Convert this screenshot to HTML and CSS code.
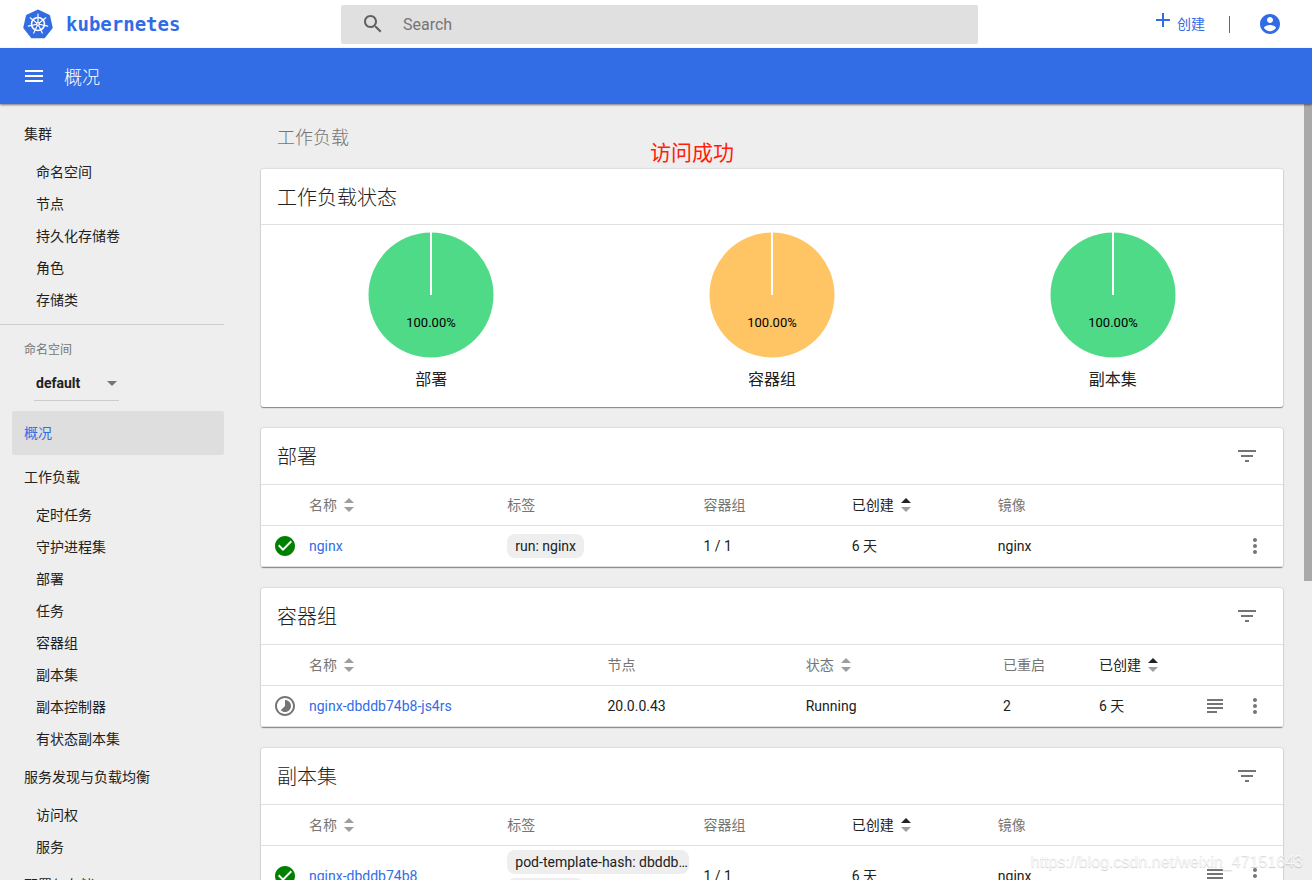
FILE: index.html
```html
<!DOCTYPE html>
<html lang="zh-CN">
<head>
<meta charset="utf-8">
<meta name="viewport" content="width=device-width, initial-scale=1">
<title>概况 - Kubernetes Dashboard</title>
<link rel="stylesheet" href="styles.css">
</head>
<body>
<svg class="sprite" aria-hidden="true">
  <symbol id="i-sort" viewBox="0 0 10 14"><path class="sort-up" d="M5 0l5 5H0z"/><path d="M0 9h10l-5 5z"/></symbol>
  <symbol id="i-filter" viewBox="0 0 24 24"><path d="M10 18h4v-2h-4v2zM3 6v2h18V6H3zm3 7h12v-2H6v2z"/></symbol>
  <symbol id="i-more" viewBox="0 0 24 24"><path d="M12 8c1.100 0 2-.9 2-2s-.9-2-2-2-2 .9-2 2 .9 2 2 2zm0 2c-1.100 0-2 .9-2 2s.9 2 2 2 2-.9 2-2-.9-2-2-2zm0 6c-1.100 0-2 .9-2 2s.9 2 2 2 2-.9 2-2-.9-2-2-2z"/></symbol>
  <symbol id="i-logs" viewBox="0 0 24 24"><path d="M14 17H4v2h10v-2zm6-8H4v2h16V9zM4 15h16v-2H4v2zM4 5v2h16V5H4z"/></symbol>
  <symbol id="i-ok" viewBox="0 0 24 24"><path d="M12 2C6.480 2 2 6.480 2 12s4.480 10 10 10 10-4.480 10-10S17.520 2 12 2zm-2 15l-5-5 1.410-1.410L10 14.170l7.590-7.590L19 8l-9 9z"/></symbol>
  <symbol id="i-pending" viewBox="0 0 24 24"><path d="M16.240 7.760C15.070 6.590 13.540 6 12 6v6l-4.240 4.240c2.340 2.340 6.140 2.340 8.490 0 2.340-2.340 2.340-6.140-.01-8.480zM12 2C6.480 2 2 6.480 2 12s4.480 10 10 10 10-4.480 10-10S17.520 2 12 2zm0 18c-4.420 0-8-3.580-8-8s3.580-8 8-8 8 3.580 8 8-3.580 8-8 8z"/></symbol>
</svg>

<header class="topbar">
  <a class="brand" href="#">
    <svg class="brand-mark" viewBox="0 0 30 30" aria-hidden="true">
      <path d="M15 2L25.600 7.100 28.200 18.500 20.900 27.700H9.100L1.800 18.500 4.400 7.100z" fill="#326ce5" stroke="#326ce5" stroke-width="3" stroke-linejoin="round"/>
      <g fill="none" stroke="#fff" stroke-linecap="round">
        <circle cx="15" cy="15" r="6.500" stroke-width="1.600"/>
        <path stroke-width="1.200" d="M15 15V5M15 15l7.800-6.200M15 15l9.700 2.200M15 15l4.300 9M15 15l-4.300 9M15 15l-9.700 2.200M15 15L7.200 8.800"/>
      </g>
      <circle cx="15" cy="15" r="1.800" fill="#fff"/><circle cx="15" cy="15" r=".8" fill="#326ce5"/>
    </svg>
    <span class="brand-name">kubernetes</span>
  </a>
  <label class="search">
    <svg class="icon" viewBox="0 0 24 24" aria-hidden="true"><path d="M15.500 14h-.79l-.28-.27C15.410 12.590 16 11.110 16 9.500 16 5.910 13.090 3 9.500 3S3 5.910 3 9.500 5.910 16 9.500 16c1.610 0 3.090-.59 4.230-1.570l.27.28v.79l5 4.990L20.490 19l-4.990-5zm-6 0C7.010 14 5 11.990 5 9.500S7.010 5 9.500 5 14 7.010 14 9.500 11.990 14 9.500 14z"/></svg>
    <input class="search-input" type="text" placeholder="Search" aria-label="Search">
  </label>
  <div class="top-actions">
    <button class="create" type="button">
      <svg class="icon create-icon" viewBox="0 0 24 24" aria-hidden="true"><path d="M19 13h-6v6h-2v-6H5v-2h6V5h2v6h6v2z"/></svg>
      <span>创建</span>
    </button>
    <span class="top-divider"></span>
    <button class="icon-button account" type="button" aria-label="账户">
      <svg class="icon" viewBox="0 0 24 24" aria-hidden="true"><path d="M12 2C6.480 2 2 6.480 2 12s4.480 10 10 10 10-4.480 10-10S17.520 2 12 2zm0 3c1.660 0 3 1.340 3 3s-1.340 3-3 3-3-1.340-3-3 1.340-3 3-3zm0 14.200c-2.500 0-4.710-1.280-6-3.220.03-1.990 4-3.080 6-3.080 1.990 0 5.970 1.090 6 3.080-1.290 1.940-3.500 3.220-6 3.220z"/></svg>
    </button>
  </div>
</header>

<div class="actionbar">
  <button class="icon-button menu" type="button" aria-label="菜单">
    <svg class="icon" viewBox="0 0 24 24" aria-hidden="true"><path d="M3 18h18v-2H3v2zm0-5h18v-2H3v2zm0-7v2h18V6H3z"/></svg>
  </button>
  <h1 class="page-title">概况</h1>
</div>

<div class="layout">
  <nav class="sidebar">
    <a class="nav-group" href="#">集群</a>
    <a class="nav-item" href="#">命名空间</a>
    <a class="nav-item" href="#">节点</a>
    <a class="nav-item" href="#">持久化存储卷</a>
    <a class="nav-item" href="#">角色</a>
    <a class="nav-item" href="#">存储类</a>
    <div class="namespace">
      <label class="namespace-label" for="namespace">命名空间</label>
      <div class="select-wrap">
        <select class="namespace-select" id="namespace"><option>default</option></select>
      </div>
    </div>
    <a class="nav-group active" href="#">概况</a>
    <a class="nav-group" href="#">工作负载</a>
    <a class="nav-item" href="#">定时任务</a>
    <a class="nav-item" href="#">守护进程集</a>
    <a class="nav-item" href="#">部署</a>
    <a class="nav-item" href="#">任务</a>
    <a class="nav-item" href="#">容器组</a>
    <a class="nav-item" href="#">副本集</a>
    <a class="nav-item" href="#">副本控制器</a>
    <a class="nav-item" href="#">有状态副本集</a>
    <a class="nav-group" href="#">服务发现与负载均衡</a>
    <a class="nav-item" href="#">访问权</a>
    <a class="nav-item" href="#">服务</a>
    <a class="nav-group" href="#">配置与存储</a>
  </nav>

  <main class="content">
    <h2 class="section-title">工作负载</h2>
    <p class="note">访问成功</p>

    <section class="card">
      <div class="card-head card-head-short"><h3 class="card-title">工作负载状态</h3></div>
      <div class="charts">
        <figure class="chart">
          <svg class="pie" viewBox="0 0 126 126" role="img" aria-label="部署 100.00%">
            <circle cx="63" cy="63" r="62.500" fill="#4fda88"/><path d="M63 0v63" stroke="#fff" stroke-width="2"/>
            <text class="pie-text" x="63" y="95" text-anchor="middle">100.00%</text>
          </svg>
          <figcaption class="chart-name">部署</figcaption>
        </figure>
        <figure class="chart">
          <svg class="pie" viewBox="0 0 126 126" role="img" aria-label="容器组 100.00%">
            <circle cx="63" cy="63" r="62.500" fill="#ffc464"/><path d="M63 0v63" stroke="#fff" stroke-width="2"/>
            <text class="pie-text" x="63" y="95" text-anchor="middle">100.00%</text>
          </svg>
          <figcaption class="chart-name">容器组</figcaption>
        </figure>
        <figure class="chart">
          <svg class="pie" viewBox="0 0 126 126" role="img" aria-label="副本集 100.00%">
            <circle cx="63" cy="63" r="62.500" fill="#4fda88"/><path d="M63 0v63" stroke="#fff" stroke-width="2"/>
            <text class="pie-text" x="63" y="95" text-anchor="middle">100.00%</text>
          </svg>
          <figcaption class="chart-name">副本集</figcaption>
        </figure>
      </div>
    </section>

    <section class="card">
      <div class="card-head">
        <h3 class="card-title">部署</h3>
        <button class="icon-button" type="button" aria-label="筛选"><svg class="icon"><use href="#i-filter"/></svg></button>
      </div>
      <table class="table">
        <colgroup><col class="c-status"><col class="c-name"><col class="c-labels"><col class="c-pods"><col class="c-created"><col></colgroup>
        <thead><tr>
          <th></th>
          <th><button class="sort" type="button">名称<svg class="sort-icon"><use href="#i-sort"/></svg></button></th>
          <th>标签</th><th>容器组</th>
          <th><button class="sort sorted" type="button">已创建<svg class="sort-icon"><use href="#i-sort"/></svg></button></th>
          <th>镜像</th>
        </tr></thead>
        <tbody><tr>
          <td><svg class="icon status ok"><use href="#i-ok"/></svg></td>
          <td><a class="link" href="#">nginx</a></td>
          <td><span class="chip">run: nginx</span></td>
          <td>1 / 1</td><td>6 天</td>
          <td><div class="last"><span>nginx</span><span class="row-actions">
            <button class="icon-button" type="button" aria-label="更多"><svg class="icon"><use href="#i-more"/></svg></button></span></div></td>
        </tr></tbody>
      </table>
    </section>

    <section class="card">
      <div class="card-head">
        <h3 class="card-title">容器组</h3>
        <button class="icon-button" type="button" aria-label="筛选"><svg class="icon"><use href="#i-filter"/></svg></button>
      </div>
      <table class="table">
        <colgroup><col class="c-status"><col class="c-pod-name"><col class="c-node"><col class="c-state"><col class="c-restarts"><col></colgroup>
        <thead><tr>
          <th></th>
          <th><button class="sort" type="button">名称<svg class="sort-icon"><use href="#i-sort"/></svg></button></th>
          <th>节点</th>
          <th><button class="sort" type="button">状态<svg class="sort-icon"><use href="#i-sort"/></svg></button></th>
          <th>已重启</th>
          <th><button class="sort sorted" type="button">已创建<svg class="sort-icon"><use href="#i-sort"/></svg></button></th>
        </tr></thead>
        <tbody><tr>
          <td><svg class="icon status"><use href="#i-pending"/></svg></td>
          <td><a class="link" href="#">nginx-dbddb74b8-js4rs</a></td>
          <td>20.0.0.43</td><td>Running</td><td>2</td>
          <td><div class="last"><span>6 天</span><span class="row-actions">
            <button class="icon-button" type="button" aria-label="日志"><svg class="icon"><use href="#i-logs"/></svg></button>
            <button class="icon-button" type="button" aria-label="更多"><svg class="icon"><use href="#i-more"/></svg></button></span></div></td>
        </tr></tbody>
      </table>
    </section>

    <section class="card">
      <div class="card-head">
        <h3 class="card-title">副本集</h3>
        <button class="icon-button" type="button" aria-label="筛选"><svg class="icon"><use href="#i-filter"/></svg></button>
      </div>
      <table class="table">
        <colgroup><col class="c-status"><col class="c-name"><col class="c-labels"><col class="c-pods"><col class="c-created"><col></colgroup>
        <thead><tr>
          <th></th>
          <th><button class="sort" type="button">名称<svg class="sort-icon"><use href="#i-sort"/></svg></button></th>
          <th>标签</th><th>容器组</th>
          <th><button class="sort sorted" type="button">已创建<svg class="sort-icon"><use href="#i-sort"/></svg></button></th>
          <th>镜像</th>
        </tr></thead>
        <tbody><tr>
          <td><svg class="icon status ok"><use href="#i-ok"/></svg></td>
          <td><a class="link" href="#">nginx-dbddb74b8</a></td>
          <td><div class="chips"><span class="chip chip-long">pod-template-hash: dbddb74b8</span><span class="chip">run: nginx</span></div></td>
          <td>1 / 1</td><td>6 天</td>
          <td><div class="last"><span>nginx</span><span class="row-actions">
            <button class="icon-button" type="button" aria-label="日志"><svg class="icon"><use href="#i-logs"/></svg></button>
            <button class="icon-button" type="button" aria-label="更多"><svg class="icon"><use href="#i-more"/></svg></button></span></div></td>
        </tr></tbody>
      </table>
    </section>
  </main>
  <div class="scrollbar"><div class="scroll-thumb"></div></div>
</div>
<div class="watermark">https://blog.csdn.net/weixin_47151643</div>
</body>
</html>
```
FILE: styles.css
```css
* { box-sizing: border-box; }

body {
  margin: 0;
  height: 100vh;
  display: flex;
  flex-direction: column;
  overflow: hidden;
  position: relative;
  background: #eee;
  color: #212121;
  font: 14px/20px Roboto, "Noto Sans CJK SC", sans-serif;
}

button, input, select { font: inherit; color: inherit; }
button { padding: 0; border: 0; background: none; cursor: pointer; }
a { color: inherit; text-decoration: none; }
h1, h2, h3, p, figure { margin: 0; font-weight: 400; }

.sprite { display: none; }
.icon { display: block; width: 24px; height: 24px; fill: currentColor; flex: none; }
.icon-button { display: block; color: #757575; }

/* Top bar */
.topbar {
  flex: none;
  height: 48px;
  display: grid;
  grid-template-columns: 341fr 637fr 334fr;
  align-items: center;
  background: #fff;
}
.brand { display: flex; align-items: center; gap: 13px; padding-left: 23px; color: #326ce5; }
.brand-mark { width: 30px; height: 30px; }
.brand-name { font: bold 19px/24px "DejaVu Sans Mono", monospace; }
.search {
  display: flex;
  align-items: center;
  gap: 18px;
  height: 39px;
  padding: 0 20px;
  border-radius: 2px;
  background: #e0e0e0;
  color: #616161;
}
.search-input { flex: 1; min-width: 0; padding: 2px 0 0; border: 0; outline: 0; background: none; font-size: 16px; }
.search-input::placeholder { color: #757575; opacity: 1; }
.top-actions { display: flex; align-items: center; justify-content: flex-end; padding-right: 30px; color: #326ce5; }
.create { display: flex; align-items: center; gap: 2px; }
.create-icon { margin-bottom: 8px; }
.top-divider { width: 1px; height: 17px; margin: 0 28px 0 24px; background: #326ce5; }
.account { color: #326ce5; }

/* Title bar */
.actionbar {
  flex: none;
  height: 56px;
  display: flex;
  align-items: center;
  gap: 18px;
  padding: 0 22px;
  background: #326de6;
  color: #fff;
  box-shadow: 0 1px 2px rgba(0, 0, 0, .5);
  z-index: 1;
}
.menu { color: #fff; }
.page-title { padding-top: 4px; font-size: 18px; line-height: 24px; font-weight: 300; }

.layout { flex: 1; min-height: 0; display: flex; overflow: hidden; }

/* Navigation */
.sidebar { flex: none; width: 224px; padding-top: 8px; }
.nav-group { display: block; margin-left: 12px; padding: 12px; border-radius: 2px; }
.nav-item { display: block; padding: 6px 12px 6px 36px; }
.nav-group.active { background: #dedede; color: #326de6; }
.namespace { margin-top: 8px; padding: 16px 24px 10px; border-top: 1px solid #ccc; }
.namespace-label { display: block; font-size: 12px; line-height: 18px; color: #757575; }
.select-wrap { position: relative; width: 85px; margin: 7px 0 0 10px; }
.select-wrap::after {
  content: "";
  position: absolute;
  right: 2px;
  top: 15px;
  border: 5px solid transparent;
  border-top-color: #757575;
  border-bottom: 0;
  pointer-events: none;
}
.namespace-select {
  display: block;
  width: 100%;
  height: 35px;
  padding: 0 2px;
  border: 0;
  border-bottom: 1px solid #ccc;
  border-radius: 0;
  background: none;
  appearance: none;
  font-weight: 700;
}

/* Main column */
.content { flex: 1; min-width: 0; position: relative; padding: 0 21px 0 37px; }
.section-title { padding: 22px 16px 19px; font-size: 18px; line-height: 24px; font-weight: 300; color: #757575; }
.note { position: absolute; left: 426px; top: 36px; font-size: 21px; line-height: 26px; color: #ff1e0a; }
.card {
  margin-bottom: 21px;
  border-radius: 2px;
  background: #fff;
  box-shadow: 0 1px 1px rgba(0, 0, 0, .4), 0 0 2px rgba(0, 0, 0, .25);
}
.card-head {
  display: flex;
  align-items: center;
  justify-content: space-between;
  height: 57px;
  padding: 0 24px 0 16px;
  border-bottom: 1px solid #e0e0e0;
}
.card-head-short { height: 56px; }
.card-title { padding-top: 2px; font-size: 20px; line-height: 28px; font-weight: 300; }

.charts { display: grid; grid-template-columns: repeat(3, 1fr); padding: 7px 0 15px; }
.chart { display: flex; flex-direction: column; align-items: center; gap: 10px; }
.pie { width: 126px; height: 126px; }
.pie-text { font-size: 13px; fill: #000; }
.chart-name { font-size: 16px; line-height: 24px; }

/* Resource tables */
.table { width: 100%; table-layout: fixed; border-collapse: separate; border-spacing: 0; }
.c-status { width: 48px; }
.c-name { width: 19.4%; }
.c-labels { width: 19.2%; }
.c-pods { width: 14.5%; }
.c-created { width: 14.3%; }
.c-pod-name { width: 29.2%; }
.c-node { width: 19.4%; }
.c-state { width: 19.3%; }
.c-restarts { width: 9.4%; }
.table th { height: 41px; padding: 0; border-bottom: 1px solid #e0e0e0; font-weight: 400; text-align: left; color: #757575; }
.table td { height: 41px; padding: 0; border-bottom: 1px solid #e0e0e0; }
.sort { display: flex; align-items: center; gap: 7px; }
.sorted { color: #212121; }
.sort-icon { width: 10px; height: 14px; fill: #9e9e9e; --up: #9e9e9e; }
.sorted .sort-icon { --up: #212121; }
.sort-up { fill: var(--up); }
.status { margin: 0 auto; color: #757575; }
.ok { color: #008000; }
.link { color: #326de6; }
.chips { display: flex; flex-direction: column; align-items: flex-start; gap: 4px; padding: 4px 0; }
.chip {
  display: block;
  width: fit-content;
  max-width: 182px;
  padding: 2px 8px;
  border-radius: 8px;
  background: #eee;
  overflow: hidden;
  white-space: nowrap;
  text-overflow: ellipsis;
}
.chip-long { padding-right: 0; }
.last { display: flex; align-items: center; justify-content: space-between; padding-right: 16px; }
.row-actions { display: flex; gap: 16px; }

.scrollbar { flex: none; width: 8px; }
.scroll-thumb { height: 61.5%; background: #a9a9a9; }

.watermark {
  position: absolute;
  right: 9px;
  bottom: 8px;
  font: 16px/20px "Liberation Sans", Arial, sans-serif;
  color: rgba(255, 255, 255, .8);
  text-shadow: 0 1px 1px rgba(0, 0, 0, .2);
}
```
